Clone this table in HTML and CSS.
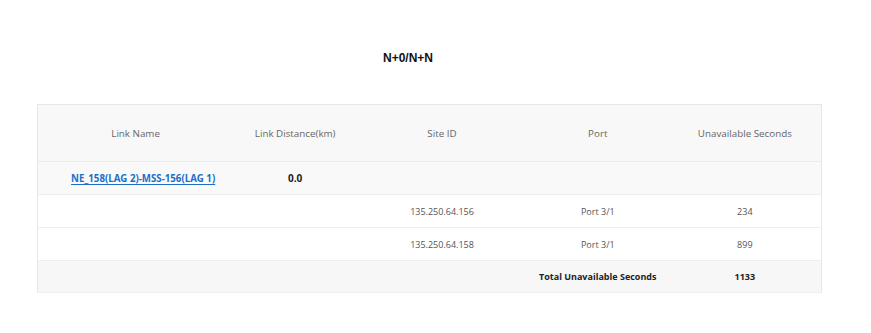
FILE: index.html
```html
<!DOCTYPE html>
<html>
<head>
<meta charset="utf-8">
<link rel="stylesheet" href="styles.css">
</head>
<body>
<h1 class="title">N+0/N+N</h1>
<div class="page">
  <table class="report">
    <colgroup>
      <col class="c1"><col class="c2"><col class="c3"><col class="c4"><col class="c5">
    </colgroup>
    <thead>
      <tr>
        <th>Link Name</th>
        <th>Link Distance(km)</th>
        <th>Site ID</th>
        <th>Port</th>
        <th>Unavailable Seconds</th>
      </tr>
    </thead>
    <tbody>
      <tr class="link-row">
        <td class="link-cell"><a href="#" class="link">NE_158(LAG 2)-MSS-156(LAG 1)</a></td>
        <td class="strong big">0.0</td>
        <td></td><td></td><td></td>
      </tr>
      <tr>
        <td></td><td></td>
        <td>135.250.64.156</td>
        <td>Port 3/1</td>
        <td>234</td>
      </tr>
      <tr>
        <td></td><td></td>
        <td>135.250.64.158</td>
        <td>Port 3/1</td>
        <td>899</td>
      </tr>
      <tr class="total-row">
        <td></td><td></td><td></td>
        <td class="strong">Total Unavailable Seconds</td>
        <td class="strong">1133</td>
      </tr>
    </tbody>
  </table>
</div>
</body>
</html>
```

FILE: styles.css
```css
html, body {
  margin: 0;
  padding: 0;
  background: #ffffff;
}
body {
  font-family: "Open Sans", "Noto Sans", sans-serif;
  color: #444;
}
.title {
  margin: 0;
  padding: 51px 55px 0 0;
  height: 53px;
  text-align: center;
  font-family: "Liberation Sans", Arial, sans-serif;
  font-size: 12px;
  font-weight: bold;
  line-height: 14px;
  color: #111;
}
.page {
  padding: 0 49px 0 37px;
}
.report {
  width: 785px;
  border-collapse: collapse;
  border: 1px solid #e6e6e6;
  font-size: 9px;
}
.c1 { width: 196px; }
.c2 { width: 124px; }
.c3 { width: 170px; }
.c4 { width: 142px; }
.c5 { width: 153px; }
.report th {
  height: 56px;
  background: #f8f8f8;
  font-weight: normal;
  color: #666;
  font-size: 9.8px;
  text-align: center;
  border-bottom: 1px solid #ebebeb;
  padding: 0;
}
.report td {
  height: 32px;
  text-align: center;
  color: #555;
  border-bottom: 1px solid #eeeeee;
  padding: 0;
}
.report .link-cell {
  padding-left: 15px;
}
.link-row td {
  background: #f9f9f9;
}
.total-row td {
  background: #f7f7f7;
  height: 31px;
}
.report .strong {
  font-weight: bold;
  color: #222;
}
.report .big {
  font-size: 10px;
}
.link {
  color: #1b6fc8;
  font-weight: bold;
  font-size: 9.7px;
  text-decoration: underline;
  text-underline-offset: 2px;
}
```
